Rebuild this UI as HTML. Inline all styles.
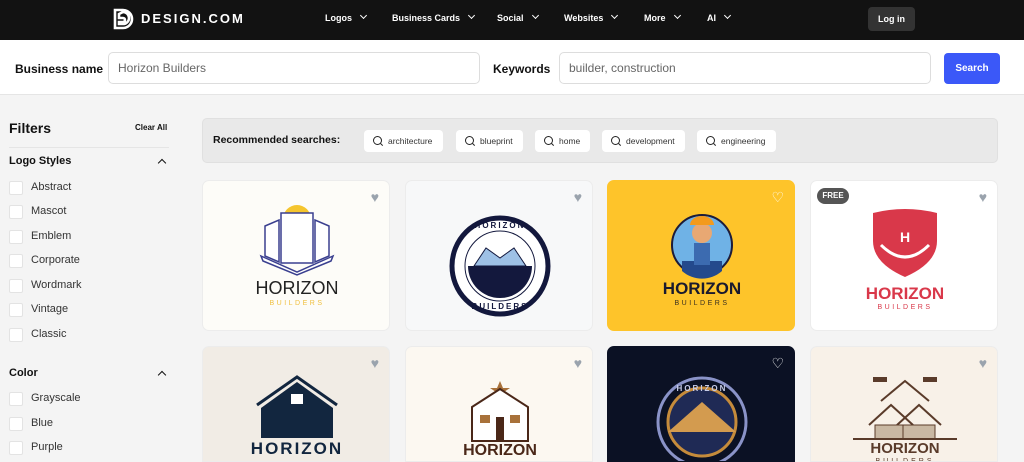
<!DOCTYPE html>
<html style="height:462px;overflow:hidden"><head><meta charset="utf-8"><style>
*{box-sizing:border-box;margin:0;padding:0}
body{width:1024px;height:462px;overflow:hidden;background:#f4f4f4;font-family:"Liberation Sans",Arial,sans-serif;position:relative;color:#111}
.nav{position:absolute;left:0;top:0;width:1024px;height:40px;background:#121212}
.nav .it{position:absolute;top:13px;color:#fff;font-size:9px;font-weight:bold}
.nav .it:after{content:"";display:inline-block;width:4px;height:4px;border-right:1.3px solid #fff;border-bottom:1.3px solid #fff;transform:rotate(45deg);margin-left:9px;position:relative;top:-3px}
.login{position:absolute;left:868px;top:7px;width:47px;height:24px;background:#333;border-radius:4px;color:#fff;font-size:9px;font-weight:bold;text-align:center;line-height:24px}
.sb{position:absolute;left:0;top:40px;width:1024px;height:55px;background:#fff;border-bottom:1px solid #e5e5e5}
.lbl{position:absolute;top:22px;font-size:12px;font-weight:bold}
.inp{position:absolute;top:12px;height:32px;border:1px solid #ddd;border-radius:5px;font-size:12px;color:#666;padding-left:9px;line-height:30px}
.btn{position:absolute;left:944px;top:13px;width:56px;height:31px;background:#3b58f8;border-radius:4px;color:#fff;font-size:10px;font-weight:bold;text-align:center;line-height:31px}
.side{position:absolute;left:9px}
.cb{position:absolute;left:9px;width:14px;height:14px;background:#fff;border:1px solid #e3e3e3;border-radius:2px}
.ct{position:absolute;left:31px;font-size:11px;color:#333}
.chev{position:absolute;left:159px;width:6px;height:6px;border-left:1.5px solid #111;border-top:1.5px solid #111;transform:rotate(45deg)}
.rec{position:absolute;left:202px;top:118px;width:796px;height:45px;background:#e9e9e9;border-radius:5px;border:1px solid #e0e0e0}
.chip{position:absolute;top:11px;height:22px;background:#fff;border-radius:4px;font-size:8.5px;color:#333;line-height:22px;padding-left:24px}
.chip:before{content:"";position:absolute;left:9px;top:6px;width:7px;height:7px;border:1.4px solid #222;border-radius:50%}
.chip:after{content:"";position:absolute;left:16px;top:14px;width:3px;height:1.4px;background:#222;transform:rotate(45deg)}
.card{position:absolute;width:188px;height:151px;border-radius:7px;overflow:hidden;border:1px solid #ececec}
.r2{height:116px;border-bottom-left-radius:0;border-bottom-right-radius:0}
.card svg{position:absolute;left:0;top:0}
.heart{position:absolute;right:10px;top:8px;font-size:14px;color:#9aa3ad}
</style></head><body>
<div class="nav">
<svg style="position:absolute;left:112px;top:8px" width="22" height="24" viewBox="0 0 22 24"><path d="M3 2h8a9 9 0 0 1 0 18H3z M7 6v4h4a2 2 0 0 1 0 4H7v2h4a6 6 0 0 0 0-12z" fill="none" stroke="#fff" stroke-width="2.6"/></svg>
<div style="position:absolute;left:141px;top:11px;color:#fff;font-size:13px;font-weight:bold;letter-spacing:2px">DESIGN.COM</div>
<div class="it" style="left:325px">Logos</div>
<div class="it" style="left:392px">Business Cards</div>
<div class="it" style="left:497px">Social</div>
<div class="it" style="left:564px">Websites</div>
<div class="it" style="left:644px">More</div>
<div class="it" style="left:707px">AI</div>
<div class="login">Log in</div>
</div>
<div class="sb">
<div class="lbl" style="left:15px">Business name</div>
<div class="inp" style="left:108px;width:372px">Horizon Builders</div>
<div class="lbl" style="left:493px">Keywords</div>
<div class="inp" style="left:559px;width:372px">builder, construction</div>
<div class="btn">Search</div>
</div>
<div class="side" style="top:120px;font-size:14px;font-weight:bold">Filters</div>
<div style="position:absolute;left:135px;top:123px;font-size:8px;font-weight:bold">Clear All</div>
<div style="position:absolute;left:9px;top:147px;width:160px;height:1px;background:#e5e5e5"></div>
<div class="side" style="top:155px;font-size:11px;font-weight:bold">Logo Styles</div><div class="chev" style="top:160px"></div>
<div class="cb" style="top:181px"></div><div class="ct" style="top:181px">Abstract</div>
<div class="cb" style="top:205px"></div><div class="ct" style="top:205px">Mascot</div>
<div class="cb" style="top:230px"></div><div class="ct" style="top:230px">Emblem</div>
<div class="cb" style="top:254px"></div><div class="ct" style="top:254px">Corporate</div>
<div class="cb" style="top:279px"></div><div class="ct" style="top:279px">Wordmark</div>
<div class="cb" style="top:303px"></div><div class="ct" style="top:303px">Vintage</div>
<div class="cb" style="top:328px"></div><div class="ct" style="top:328px">Classic</div>
<div class="side" style="top:367px;font-size:11px;font-weight:bold">Color</div><div class="chev" style="top:372px"></div>
<div class="cb" style="top:392px"></div><div class="ct" style="top:392px">Grayscale</div>
<div class="cb" style="top:417px"></div><div class="ct" style="top:417px">Blue</div>
<div class="cb" style="top:441px"></div><div class="ct" style="top:441px">Purple</div>

<div class="rec">
<div style="position:absolute;left:10px;top:15px;font-size:10.5px;font-weight:bold">Recommended searches:</div>
<div class="chip" style="left:161px;width:79px">architecture</div>
<div class="chip" style="left:253px;width:67px">blueprint</div>
<div class="chip" style="left:332px;width:55px">home</div>
<div class="chip" style="left:399px;width:83px">development</div>
<div class="chip" style="left:494px;width:79px">engineering</div>
</div>

<div class="card" style="left:202px;top:180px;background:#fdfcf8">
<svg width="188" height="151"><circle cx="94" cy="38" r="14" fill="#f5c52e"/><g fill="#fff" stroke="#3a3f8f" stroke-width="1.5"><path d="M62 45l14-6v42l-14-6z"/><path d="M126 45l-14-6v42l14-6z"/><rect x="78" y="32" width="32" height="50"/><path d="M58 75l36 16 36-16-2 5-34 14-34-14z"/></g><text x="94" y="113" font-size="18" text-anchor="middle" fill="#222" font-family="Liberation Sans">HORIZON</text><text x="94" y="124" font-size="7" letter-spacing="2.5" text-anchor="middle" fill="#f0c040" font-family="Liberation Sans">BUILDERS</text></svg><div class="heart">♥</div></div>

<div class="card" style="left:405px;top:180px;background:#f7f8f9">
<svg width="188" height="151"><circle cx="94" cy="85" r="48" fill="#fff" stroke="#13183d" stroke-width="5"/><circle cx="94" cy="85" r="35" fill="none" stroke="#13183d" stroke-width="1"/><path d="M62 85a32 32 0 0 0 64 0z" fill="#13183d"/><path d="M68 85l12-18 14 10 14-10 12 18z" fill="#9ec1e6" stroke="#13183d"/><text x="94" y="47" font-size="8" font-weight="bold" text-anchor="middle" fill="#13183d" letter-spacing="2">HORIZON</text><text x="94" y="128" font-size="8" font-weight="bold" text-anchor="middle" fill="#13183d" letter-spacing="2">BUILDERS</text></svg><div class="heart">♥</div></div>

<div class="card" style="left:607px;top:180px;background:#fec42a;border-color:#fec42a">
<svg width="188" height="151"><circle cx="94" cy="64" r="30" fill="#6fb2e6" stroke="#1c1c3a" stroke-width="2"/><path d="M74 80h40v10a30 30 0 0 1-40 0z" fill="#244a8c"/><circle cx="94" cy="52" r="10" fill="#e8a873"/><path d="M82 44a12 9 0 0 1 24 0z" fill="#f39a1c"/><rect x="86" y="62" width="16" height="22" fill="#3c6bb0"/><text x="94" y="113" font-size="17" font-weight="bold" text-anchor="middle" fill="#1a1a2e">HORIZON</text><text x="94" y="124" font-size="7" letter-spacing="2.5" text-anchor="middle" fill="#3a3020">BUILDERS</text></svg><div class="heart" style="color:#fff">♡</div></div>

<div class="card" style="left:810px;top:180px;background:#fff">
<div style="position:absolute;left:6px;top:7px;width:32px;height:16px;border-radius:8px;background:#555;color:#fff;font-size:8px;font-weight:bold;text-align:center;line-height:16px">FREE</div>
<svg width="188" height="151"><path d="M62 32q32-8 64 0v28q0 22-32 36q-32-14-32-36z" fill="#d9384a"/><path d="M70 64q24 24 48 0" fill="none" stroke="#fff" stroke-width="3"/><text x="94" y="61" font-size="14" font-weight="bold" text-anchor="middle" fill="#fff">H</text><text x="94" y="118" font-size="17" font-weight="bold" text-anchor="middle" fill="#d9384a">HORIZON</text><text x="94" y="128" font-size="7" letter-spacing="2.5" text-anchor="middle" fill="#d9384a">BUILDERS</text></svg><div class="heart">♥</div></div>

<div class="card r2" style="left:202px;top:346px;background:#f1ece5">
<svg width="188" height="116"><path d="M58 61l36-26 36 26v30H58z" fill="#12263f"/><path d="M54 58l40-28 40 28" fill="none" stroke="#12263f" stroke-width="3"/><rect x="88" y="47" width="12" height="10" fill="#fff"/><text x="94" y="107" font-size="17" font-weight="bold" text-anchor="middle" fill="#12263f" letter-spacing="2">HORIZON</text></svg><div class="heart">♥</div></div>

<div class="card r2" style="left:405px;top:346px;background:#fcf8f1">
<svg width="188" height="116"><path d="M94 34l3 7h7l-6 4 2 7-6-4-6 4 2-7-6-4h7z" fill="#a8713a"/><path d="M66 60l28-18 28 18v34H66z" fill="#fff" stroke="#4a2718" stroke-width="2"/><rect x="90" y="70" width="8" height="24" fill="#4a2718"/><rect x="74" y="68" width="10" height="8" fill="#a8713a"/><rect x="104" y="68" width="10" height="8" fill="#a8713a"/><text x="94" y="108" font-size="16" font-weight="bold" text-anchor="middle" fill="#4a2718">HORIZON</text></svg><div class="heart">♥</div></div>

<div class="card r2" style="left:607px;top:346px;background:#0b1124;border-color:#0b1124">
<svg width="188" height="116"><circle cx="94" cy="75" r="44" fill="none" stroke="#8a93c8" stroke-width="3"/><circle cx="94" cy="75" r="34" fill="#1f2a55" stroke="#c58b3b" stroke-width="3"/><path d="M60 85l34-30 34 30z" fill="#d39b4f"/><text x="94" y="44" font-size="8" font-weight="bold" text-anchor="middle" fill="#c7cce8" letter-spacing="2">HORIZON</text></svg><div class="heart" style="color:#fff">♡</div></div>

<div class="card r2" style="left:810px;top:346px;background:#f8f1e8">
<svg width="188" height="116"><path d="M58 78l22-20 22 20M86 78l22-20 22 20M70 54l24-20 24 20" fill="none" stroke="#5a3b2a" stroke-width="2"/><rect x="64" y="78" width="32" height="14" fill="#c9b8a3" stroke="#5a3b2a"/><rect x="92" y="78" width="32" height="14" fill="#c9b8a3" stroke="#5a3b2a"/><path d="M42 92h104" stroke="#5a3b2a" stroke-width="2"/><rect x="62" y="30" width="14" height="5" fill="#5a3b2a"/><rect x="112" y="30" width="14" height="5" fill="#5a3b2a"/><text x="94" y="106" font-size="15" font-weight="bold" text-anchor="middle" fill="#5a3b2a">HORIZON</text><text x="94" y="116" font-size="7" letter-spacing="3" text-anchor="middle" fill="#5a3b2a">BUILDERS</text></svg><div class="heart">♥</div></div>
</body></html>
